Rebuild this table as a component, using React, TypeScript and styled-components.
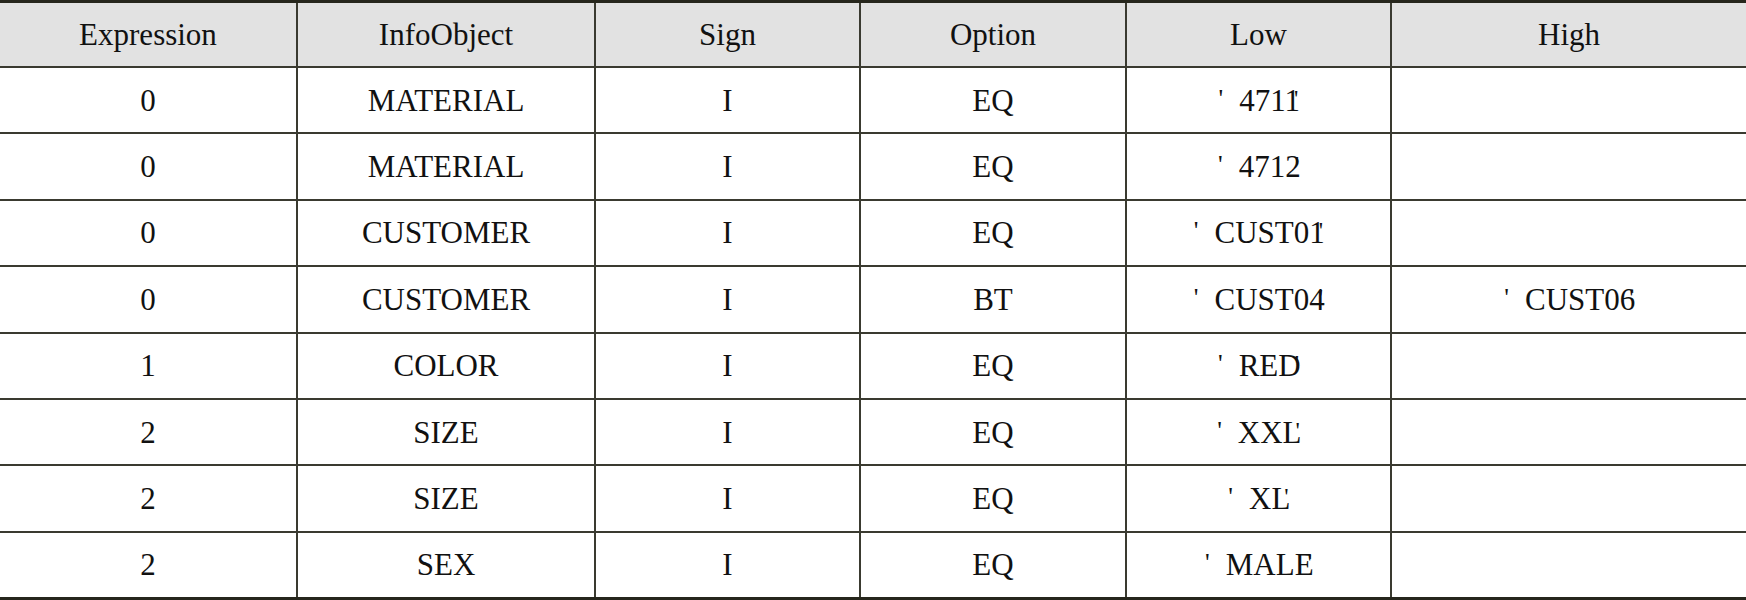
import React from "react";
import styled, { createGlobalStyle } from "styled-components";

const GlobalStyle = createGlobalStyle`
  html, body {
    margin: 0;
    padding: 0;
    background: #ffffff;
  }
  body {
    font-family: "Liberation Serif", "Times New Roman", serif;
  }
`;

const Table = styled.div`
  width: 1746px;
  height: 600px;
  box-sizing: border-box;
  display: flex;
  flex-direction: column;
  border-top: 3px solid #26261c;
  border-bottom: 3px solid #26261c;
  background: #ffffff;
`;

const Row = styled.div<{ $header?: boolean; $last?: boolean }>`
  display: grid;
  grid-template-columns: 298px 298px 265px 266px 265px 1fr;
  box-sizing: border-box;
  ${(p) => (p.$header ? "height: 65px; flex: none;" : "flex: 1 1 0;")}
  background: ${(p) => (p.$header ? "#e2e2e2" : "#ffffff")};
  border-bottom: ${(p) => (p.$last ? "none" : "2px solid #3a3a30")};
`;

const Cell = styled.div<{ $lastCol?: boolean }>`
  display: flex;
  align-items: center;
  justify-content: center;
  box-sizing: border-box;
  border-right: ${(p) => (p.$lastCol ? "none" : "2px solid #3a3a30")};
  font-family: "Liberation Serif", "Times New Roman", serif;
  font-size: 31px;
  color: #111111;
  white-space: nowrap;
  line-height: 1;
`;

const QuotedValue = styled.span`
  display: inline-block;
  white-space: nowrap;
`;

const Quote = styled.span`
  display: inline-block;
  font-size: 26px;
  margin-right: 16px;
  position: relative;
  top: -4px;
`;

const ClosingQuote = styled.span`
  display: inline-block;
  font-size: 24px;
  margin-left: -6px;
  position: relative;
  top: -5px;
`;

type Rec = {
  expr: string;
  obj: string;
  sign: string;
  option: string;
  low: string;
  high?: string;
};

const rows: Rec[] = [
  { expr: "0", obj: "MATERIAL", sign: "I", option: "EQ", low: "4711" },
  { expr: "0", obj: "MATERIAL", sign: "I", option: "EQ", low: "4712" },
  { expr: "0", obj: "CUSTOMER", sign: "I", option: "EQ", low: "CUST01" },
  { expr: "0", obj: "CUSTOMER", sign: "I", option: "BT", low: "CUST04", high: "CUST06" },
  { expr: "1", obj: "COLOR", sign: "I", option: "EQ", low: "RED" },
  { expr: "2", obj: "SIZE", sign: "I", option: "EQ", low: "XXL" },
  { expr: "2", obj: "SIZE", sign: "I", option: "EQ", low: "XL" },
  { expr: "2", obj: "SEX", sign: "I", option: "EQ", low: "MALE" },
];

const headers = ["Expression", "InfoObject", "Sign", "Option", "Low", "High"];

const Quoted: React.FC<{ value?: string }> = ({ value }) =>
  value ? (
    <QuotedValue>
      <Quote>'</Quote>
      {value}
      <ClosingQuote>'</ClosingQuote>
    </QuotedValue>
  ) : null;

export default function App() {
  return (
    <>
      <GlobalStyle />
      <Table>
        <Row $header>
          {headers.map((h, i) => (
            <Cell key={h} $lastCol={i === headers.length - 1}>
              {h}
            </Cell>
          ))}
        </Row>
        {rows.map((r, i) => (
          <Row key={i} $last={i === rows.length - 1}>
            <Cell>{r.expr}</Cell>
            <Cell>{r.obj}</Cell>
            <Cell>{r.sign}</Cell>
            <Cell>{r.option}</Cell>
            <Cell>
              <Quoted value={r.low} />
            </Cell>
            <Cell $lastCol>
              <Quoted value={r.high} />
            </Cell>
          </Row>
        ))}
      </Table>
    </>
  );
}
